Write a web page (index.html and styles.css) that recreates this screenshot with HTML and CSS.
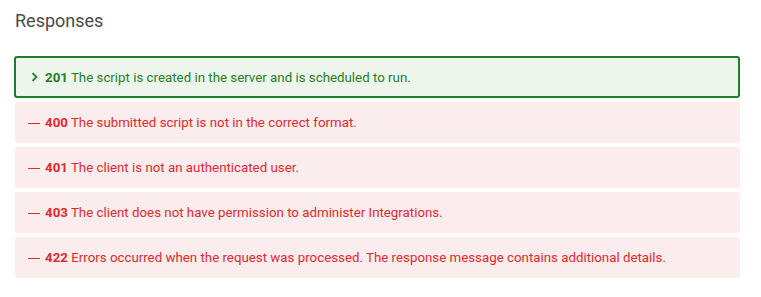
FILE: index.html
```html
<!DOCTYPE html>
<html>
  <head>
    <meta charset="UTF-8" />
    <meta name="viewport" content="width=device-width, initial-scale=1.0" />
    <title>Responses</title>
    <link rel="stylesheet" href="styles.css">
  </head>
  <body>
    <div class="responses">
      <h2 class="responses-title">Responses</h2>

      <ul class="response-list">
        <li class="response response-ok">
          <span class="marker">
            <svg width="8" height="10" viewBox="0 0 8 10" xmlns="http://www.w3.org/2000/svg">
              <path d="M1.5 1.2 L5.5 5 L1.5 8.8" fill="none" stroke="currentColor" stroke-width="1.8" />
            </svg>
          </span>
          <span class="text"><b class="code">201</b> The script is created in the server and is scheduled to run.</span>
        </li>
        <li class="response response-error">
          <span class="dash"></span>
          <span class="text"><b class="code">400</b> The submitted script is not in the correct format.</span>
        </li>
        <li class="response response-error">
          <span class="dash"></span>
          <span class="text"><b class="code">401</b> The client is not an authenticated user.</span>
        </li>
        <li class="response response-error">
          <span class="dash"></span>
          <span class="text"><b class="code">403</b> The client does not have permission to administer Integrations.</span>
        </li>
        <li class="response response-error">
          <span class="dash"></span>
          <span class="text"><b class="code">422</b> Errors occurred when the request was processed. The response message contains additional details.</span>
        </li>
      </ul>
    </div>
  </body>
</html>
```

FILE: styles.css
```css
body {
  font-family: Roboto, "Liberation Sans", Arial, sans-serif;
  margin: 0;
  padding: 0;
  background: #ffffff;
}
.responses {
  padding: 9px 21px 0 14px;
}
.responses-title {
  margin: 0 0 0 1px;
  font-size: 18px;
  font-weight: 400;
  line-height: 24px;
  color: #4a4a4a;
}
.response-list {
  list-style: none;
  margin: 23px 0 0 0;
  padding: 0;
  display: flex;
  flex-direction: column;
  gap: 4px;
}
.response {
  display: flex;
  align-items: center;
  height: 41px;
  padding: 0 14px;
  font-size: 13.3px;
  border-radius: 3px;
}
.response-ok {
  height: 38px;
  padding-left: 15px;
  border: 2px solid #1f7f26;
  background-color: #edf5ed;
  color: #1f7f26;
}
.response-error {
  margin-left: 1px;
  padding-left: 13px;
  background-color: #fbeced;
  color: #de2a2f;
}
.marker {
  display: inline-flex;
  align-items: center;
  margin-right: 6px;
}
.dash {
  display: inline-block;
  width: 12px;
  height: 1px;
  margin: 1px 5px 0 0;
  background-color: currentColor;
}
.code {
  font-weight: 700;
}
```
